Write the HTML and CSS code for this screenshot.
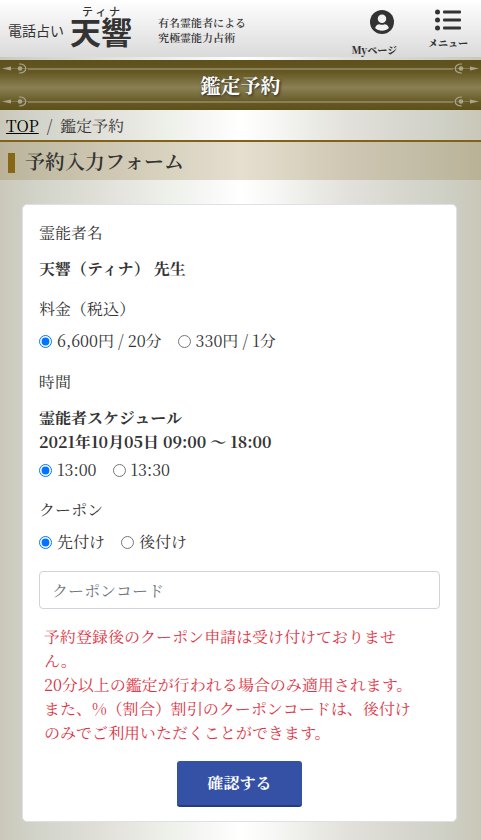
FILE: index.html
```html
<!DOCTYPE html>
<html lang="ja">
<head>
    <meta charset="UTF-8">
    <meta name="viewport" content="width=device-width, initial-scale=1.0">
    <title>鑑定予約</title>
    <link rel="stylesheet" href="styles.css">
</head>
<body>
    <svg class="defs" width="0" height="0" aria-hidden="true">
        <symbol id="ornament" viewBox="0 0 28 11">
            <path d="M2 5.500L11 3.500V7.500Z"/>
            <path d="M11 5.500H28" stroke="#a9a58c" stroke-width="1" opacity=".4"/>
            <circle cx="20" cy="5.500" r="2.300"/>
            <path d="M19 1C28 .5 28 10.500 19 10" fill="none" stroke="#a9a58c" stroke-width="1.200"/>
        </symbol>
    </svg>

    <header class="site-header">
        <a class="logo" href="#">
            <span class="logo-sub">電話占い</span>
            <span class="logo-main">
                <span class="logo-kana">テ ィ ナ</span>
                <span class="logo-name">天響</span>
            </span>
        </a>
        <p class="catch">有名霊能者による<br>究極霊能力占術</p>
        <nav class="header-nav">
            <a class="nav-item nav-mypage" href="#">
                <svg width="26" height="26" viewBox="0 0 26 26" aria-hidden="true">
                    <circle cx="13" cy="13" r="13" fill="#333"/>
                    <circle cx="13" cy="9.500" r="4.600" fill="#f3f3f3"/>
                    <path d="M5.500 19.500C6.500 16.500 8.500 15.500 10 15.500C12 16.300 14 16.300 16 15.500C17.500 15.500 19.500 16.500 20.500 19.500C16.500 23.500 9.500 23.500 5.500 19.500Z" fill="#f3f3f3"/>
                </svg>
                <span>Myページ</span>
            </a>
            <a class="nav-item nav-menu" href="#">
                <svg width="26" height="22" viewBox="0 0 26 22" fill="#333" aria-hidden="true">
                    <circle cx="2.500" cy="3" r="2.500"/>
                    <circle cx="2.500" cy="11" r="2.500"/>
                    <circle cx="2.500" cy="19" r="2.500"/>
                    <rect x="8" y="1.500" width="18" height="3" rx="1"/>
                    <rect x="8" y="9.500" width="18" height="3" rx="1"/>
                    <rect x="8" y="17.500" width="18" height="3" rx="1"/>
                </svg>
                <span>メニュー</span>
            </a>
        </nav>
    </header>

    <div class="page-title">
        <div class="deco">
            <svg class="deco-end"><use href="#ornament"/></svg>
            <span class="deco-line"></span>
            <svg class="deco-end deco-right"><use href="#ornament"/></svg>
        </div>
        <h1>鑑定予約</h1>
        <div class="deco">
            <svg class="deco-end"><use href="#ornament"/></svg>
            <span class="deco-line"></span>
            <svg class="deco-end deco-right"><use href="#ornament"/></svg>
        </div>
    </div>

    <nav class="breadcrumb">
        <a href="#">TOP</a>
        <span>/</span>
        <span>鑑定予約</span>
    </nav>

    <h2 class="section-title">予約入力フォーム</h2>

    <main>
        <form class="card">
            <div class="group">
                <p class="label">霊能者名</p>
                <p class="strong">天響（ティナ） 先生</p>
            </div>

            <fieldset class="group group-radio">
                <legend>料金（税込）</legend>
                <div class="radios">
                    <label><input type="radio" name="price" checked>6,600円 / 20分</label>
                    <label><input type="radio" name="price">330円 / 1分</label>
                </div>
            </fieldset>

            <fieldset class="group">
                <legend class="legend-time">時間</legend>
                <p class="strong">霊能者スケジュール<br>2021年10月05日 09:00 ～ 18:00</p>
                <div class="radios radios-time">
                    <label><input type="radio" name="time" checked>13:00</label>
                    <label><input type="radio" name="time">13:30</label>
                </div>
            </fieldset>

            <fieldset class="group group-radio">
                <legend>クーポン</legend>
                <div class="radios">
                    <label><input type="radio" name="coupon" checked>先付け</label>
                    <label><input type="radio" name="coupon">後付け</label>
                </div>
            </fieldset>

            <input class="text-input" type="text" placeholder="クーポンコード" aria-label="クーポンコード">

            <p class="notice">予約登録後のクーポン申請は受け付けておりません。<br>20分以上の鑑定が行われる場合のみ適用されます。<br>また、%（割合）割引のクーポンコードは、後付けのみでご利用いただくことができます。</p>

            <button class="submit" type="submit">確認する</button>
        </form>
    </main>
</body>
</html>
```

FILE: styles.css
```css
* {
    box-sizing: border-box;
}
body {
    margin: 0;
    font-family: "Noto Serif JP", "Noto Serif CJK JP", "Liberation Serif", "Noto Sans CJK JP", serif;
    font-size: 16px;
    line-height: 24px;
    color: #333;
    background: linear-gradient(to right, #cac8ba, #d1d2c8 7%, #d8d9d0 14%, #e4e3dd 24%, #eff1eb 36%, #f7f7f6 43%, #fff 50%, #f7f7f5 57%, #ecede8 64%, #e3e1dc 72%, #d8d8d0 82%, #cfd0c6 92%, #c9c7b8);
}
h1, h2, p {
    margin: 0;
}
.defs {
    position: absolute;
}

/* header */
.site-header {
    display: flex;
    height: 57px;
    padding: 0 13px 0 8px;
    margin-bottom: 3px;
    background: linear-gradient(#fff, #dadada);
}
.site-header a {
    color: #333;
    text-decoration: none;
}
.logo {
    display: flex;
    gap: 6px;
    font-family: "Noto Sans CJK JP", sans-serif;
}
.logo-sub {
    padding-top: 18px;
    font-size: 14px;
}
.logo-main {
    display: flex;
    flex-direction: column;
    align-items: center;
    padding-top: 5px;
}
.logo-kana {
    font-size: 11px;
    font-weight: 500;
    line-height: 12px;
}
.logo-name {
    font-size: 31px;
    font-weight: bold;
    line-height: 28px;
}
.catch {
    padding: 15px 0 0 26px;
    font-size: 11px;
    font-weight: 600;
    line-height: 15px;
}
.header-nav {
    display: flex;
    gap: 31px;
    margin-left: auto;
}
.nav-item {
    display: flex;
    flex-direction: column;
    align-items: center;
    font-size: 10px;
    font-weight: 900;
    line-height: 14px;
}
.nav-mypage {
    align-items: flex-end;
    gap: 9px;
    padding-top: 10px;
}
.nav-mypage svg {
    margin-right: 2px;
}
.nav-menu {
    gap: 5px;
    padding-top: 9px;
}

/* title band */
.page-title {
    display: flex;
    flex-direction: column;
    justify-content: space-between;
    height: 50px;
    padding: 3px 0;
    background: linear-gradient(#5e501b, #655824 25%, #8a8053 55%, #655824 85%, #5e501b);
}
.page-title h1 {
    font-size: 20px;
    line-height: 22px;
    text-align: center;
    color: #fff;
    text-shadow: 1px 1px 3px #222;
}
.deco {
    display: flex;
    align-items: center;
    height: 11px;
}
.deco-end {
    width: 28px;
    height: 11px;
    fill: #a9a58c;
}
.deco-right {
    transform: scaleX(-1);
}
.deco-line {
    flex: 1;
    height: 2px;
    background: #8a8056;
}

.breadcrumb {
    display: flex;
    gap: 8px;
    padding: 4px 6px 2px;
}
.breadcrumb a {
    color: #000;
    text-decoration: underline;
}
.section-title {
    display: flex;
    align-items: center;
    gap: 10px;
    height: 40px;
    padding: 0 8px;
    border-top: 2px solid #80621a;
    background: rgba(129, 96, 20, 0.2);
    font-size: 20px;
    font-weight: 600;
}
.section-title::before {
    content: "";
    width: 7px;
    height: 20px;
    margin-top: 4px;
    background: #866817;
}

/* form */
main {
    padding: 24px 24px 18px 22px;
}
.card {
    padding: 16px 16px 14px;
    border: 1px solid #dfe0e4;
    border-radius: 5px;
    background: #fff;
}
.group {
    min-width: 0;
    margin: 0 0 16px;
    padding: 0;
    border: 0;
}
.group-radio {
    margin-bottom: 17px;
}
.label {
    margin-bottom: 12px;
}
legend {
    padding: 0;
    margin-bottom: 8px;
}
.legend-time {
    margin-bottom: 12px;
}
.strong {
    font-weight: bold;
}
.radios {
    display: flex;
    gap: 16px;
}
.radios-time {
    margin-top: 4px;
}
.radios label {
    display: flex;
    align-items: center;
    gap: 5px;
}
.radios input {
    width: 13px;
    height: 13px;
    margin: 0;
    accent-color: #0075ff;
}
.text-input {
    display: block;
    width: 100%;
    height: 38px;
    padding: 6px 12px;
    border: 1px solid #ced4da;
    border-radius: 4px;
    font: inherit;
    color: #495057;
}
.text-input::placeholder {
    color: #6c757d;
}
.notice {
    padding: 16px 22px 16px 5px;
    color: #dc3545;
}
.submit {
    display: block;
    height: 46px;
    margin: 0 auto;
    padding: 0 30px;
    border: 0;
    border-bottom: 2px solid #263c7c;
    border-radius: 3px;
    background: #3451a5;
    font: inherit;
    font-weight: bold;
    color: #fff;
}
```
